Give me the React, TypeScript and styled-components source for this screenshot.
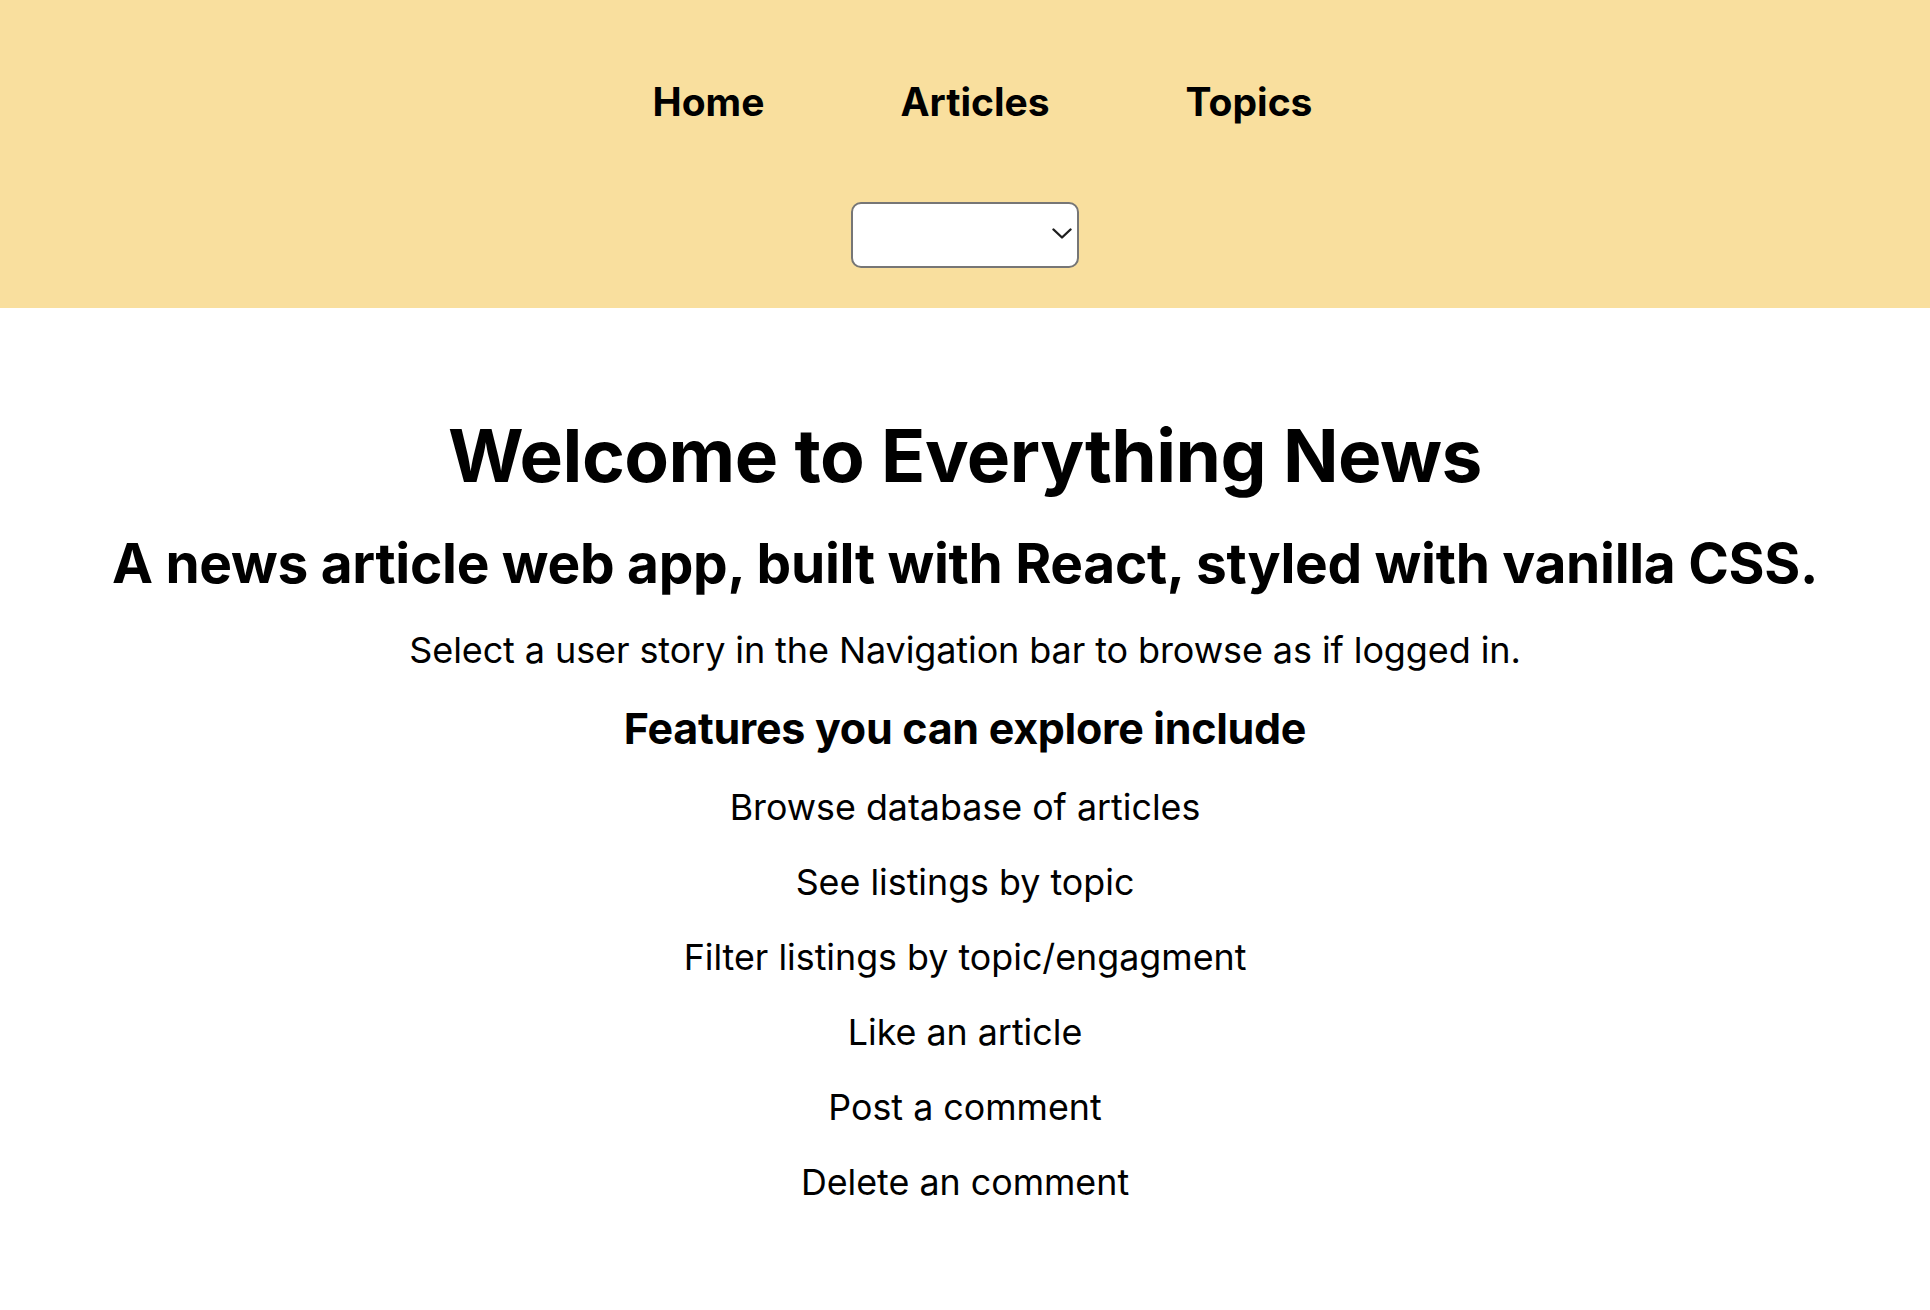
import React from "react";
import styled, { createGlobalStyle } from "styled-components";

const GlobalStyle = createGlobalStyle`
  html, body {
    margin: 0;
    padding: 0;
    background: #ffffff;
  }
  body {
    font-family: Inter, "Noto Sans", "Liberation Sans", sans-serif;
    color: #000000;
  }
`;

const Header = styled.header`
  background: #f9df9e;
  padding: 80px 0 40px;
  display: flex;
  flex-direction: column;
  align-items: center;
`;

const NavList = styled.ul`
  list-style: none;
  margin: 0;
  padding: 0 0 0 35px;
  display: flex;
  gap: 136px;
`;

const NavItem = styled.li`
  font-size: 39px;
  font-weight: 700;
  line-height: 44px;
`;

const NavLink = styled.a`
  color: #000000;
  text-decoration: none;
  cursor: pointer;
`;

const SelectWrap = styled.div`
  position: relative;
  margin-top: 78px;
  width: 228px;
  height: 66px;
`;

const UserSelect = styled.select`
  appearance: none;
  -webkit-appearance: none;
  box-sizing: border-box;
  width: 100%;
  height: 100%;
  background: #ffffff;
  border: 2px solid #767676;
  border-radius: 10px;
  font-family: inherit;
  font-size: 24px;
  padding: 0 48px 0 14px;
  outline: none;
`;

const Chevron = styled.svg`
  position: absolute;
  right: 7px;
  top: 26px;
  width: 20px;
  height: 11px;
  pointer-events: none;
`;

const Main = styled.main`
  display: flex;
  flex-direction: column;
  align-items: center;
  text-align: center;
  padding-top: 103px;
`;

const Title = styled.h1`
  margin: 0;
  font-size: 73px;
  font-weight: 700;
  line-height: 89px;
  letter-spacing: -0.5px;
`;

const Subtitle = styled.h2`
  margin: 31px 0 0;
  font-size: 55px;
  font-weight: 700;
  line-height: 65px;
  letter-spacing: -0.3px;
`;

const Lead = styled.p`
  margin: 32px 0 0;
  font-size: 36px;
  font-weight: 400;
  line-height: 45px;
  letter-spacing: -0.1px;
`;

const FeatureHeading = styled.h3`
  margin: 30px 0 0;
  font-size: 43px;
  font-weight: 700;
  line-height: 50px;
  letter-spacing: -0.3px;
`;

const FeatureList = styled.ul`
  list-style: none;
  margin: 17px 0 0;
  padding: 0;
  display: flex;
  flex-direction: column;
  align-items: center;
`;

const FeatureItem = styled.li`
  font-size: 35.8px;
  font-weight: 400;
  line-height: 75px;
`;

const features = [
  "Browse database of articles",
  "See listings by topic",
  "Filter listings by topic/engagment",
  "Like an article",
  "Post a comment",
  "Delete an comment",
];

export default function App() {
  return (
    <>
      <GlobalStyle />
      <Header>
        <nav>
          <NavList>
            <NavItem>
              <NavLink>Home</NavLink>
            </NavItem>
            <NavItem>
              <NavLink>Articles</NavLink>
            </NavItem>
            <NavItem>
              <NavLink>Topics</NavLink>
            </NavItem>
          </NavList>
        </nav>
        <SelectWrap>
          <UserSelect defaultValue="">
            <option value=""></option>
          </UserSelect>
          <Chevron viewBox="0 0 20 11" fill="none">
            <path d="M1.5 1.5 L10 9.5 L18.5 1.5" stroke="#1e1e1e" strokeWidth="2.4" strokeLinecap="round" strokeLinejoin="round" />
          </Chevron>
        </SelectWrap>
      </Header>
      <Main>
        <Title>Welcome to Everything News</Title>
        <Subtitle>A news article web app, built with React, styled with vanilla CSS.</Subtitle>
        <Lead>Select a user story in the Navigation bar to browse as if logged in.</Lead>
        <FeatureHeading>Features you can explore include</FeatureHeading>
        <FeatureList>
          {features.map((f) => (
            <FeatureItem key={f}>{f}</FeatureItem>
          ))}
        </FeatureList>
      </Main>
    </>
  );
}
